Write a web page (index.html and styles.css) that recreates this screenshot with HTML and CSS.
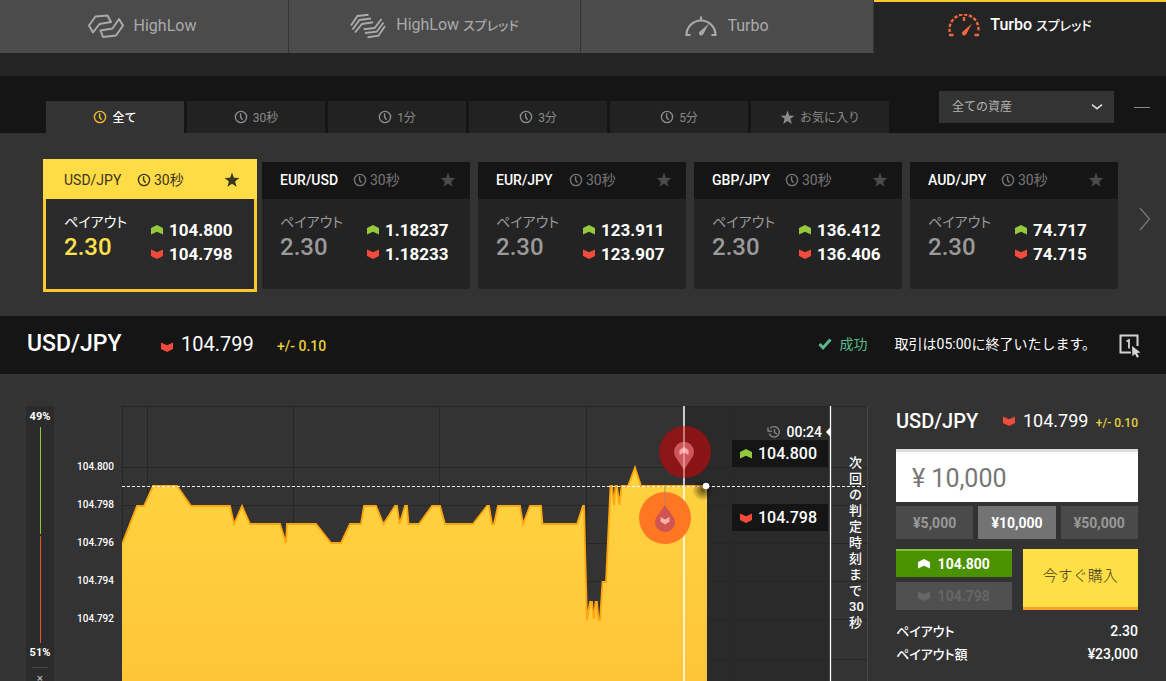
FILE: index.html
```html
<!DOCTYPE html>
<html lang="ja">
<head>
<meta charset="utf-8">
<meta name="viewport" content="width=device-width, initial-scale=1">
<title>Turbo スプレッド</title>
<link rel="stylesheet" href="styles.css">
</head>
<body>
<svg class="defs" aria-hidden="true">
  <symbol id="up" viewBox="0 0 12 10"><path d="M0 3 6 0l6 3V9.500L6 6.800 0 9.500z"/></symbol>
  <symbol id="down" viewBox="0 0 12 10"><path d="M0 .5l6 2.700L12 .5V7L6 10 0 7z"/></symbol>
  <symbol id="clock" viewBox="0 0 14 14"><g fill="none" stroke="currentColor" stroke-width="1.400"><circle cx="7" cy="7" r="5.600"/><path d="M6.600 3.200v4l2 2.600"/></g></symbol>
  <symbol id="star" viewBox="0 0 16 16"><path d="M8 .6l1.900 5.200 5.500.2-4.300 3.400 1.500 5.400L8 11.700l-4.600 3.100 1.500-5.400L.6 6l5.500-.2z"/></symbol>
</svg>

<nav class="products">
  <a class="product" href="#highlow">
    <svg class="logo" viewBox="0 0 36 26"><g fill="none" stroke="currentColor" stroke-width="2" stroke-linejoin="round"><path d="M5 19.500 1 12.500 7.500 3.500 19.500 2.500 23 9 11.500 11z"/><path d="M31 6l4 6.500-7 10L15 24l-2.500-6.500 12-2z"/></g></svg>
    <span>HighLow</span>
  </a>
  <a class="product" href="#highlow-spread">
    <svg class="logo" viewBox="0 0 36 26"><g fill="none" stroke="currentColor" stroke-width="1.900"><path d="M1 12.500 7.500 3l11-1.300M2.500 16.500 9.500 7l11.500-1.500M5 19.500l7-8.500 11-1.700M35 13l-6.500 9.700-11 1.500M33.500 9.500l-6.800 9.200L15 20M31.500 6l-7 9-11 1.300"/></g></svg>
    <span>HighLow <span class="kana">スプレッド</span></span>
  </a>
  <a class="product" href="#turbo">
    <svg class="gauge" viewBox="0 0 32 24"><path d="M5.500 21H1.500A14.500 14.500 0 1 1 30.500 21H26.500M16 2.500v4" fill="none" stroke="currentColor" stroke-width="2.200"/><path d="M24 9.500l-5.500 10.200a2.300 2.300 0 1 1-3-2.700z" fill="currentColor"/></svg>
    <span>Turbo</span>
  </a>
  <a class="product product-active" href="#turbo-spread" aria-current="page">
    <svg class="gauge gauge-hot" viewBox="0 0 32 24"><path d="M1.800 18A14.500 14.500 0 1 1 30.200 18" fill="none" stroke="currentColor" stroke-width="2.400" stroke-dasharray="3.400 1.700"/><path d="M1 21h4.500M26.500 21H31M16 3v4" stroke="currentColor" stroke-width="2.400"/><path d="M24 9.500l-5.500 10.200a2.300 2.300 0 1 1-3-2.700z" fill="currentColor"/></svg>
    <span>Turbo <span class="kana">スプレッド</span></span>
  </a>
</nav>

<header class="filters">
  <div class="periods">
    <button class="period period-active"><svg class="period-clock"><use href="#clock"/></svg><span>全て</span></button>
    <button class="period"><svg class="period-clock"><use href="#clock"/></svg><span>30秒</span></button>
    <button class="period"><svg class="period-clock"><use href="#clock"/></svg><span>1分</span></button>
    <button class="period"><svg class="period-clock"><use href="#clock"/></svg><span>3分</span></button>
    <button class="period"><svg class="period-clock"><use href="#clock"/></svg><span>5分</span></button>
    <button class="period"><svg class="period-star"><use href="#star"/></svg><span>お気に入り</span></button>
  </div>
  <div class="filter-tools">
    <select class="assets" aria-label="資産"><option>全ての資産</option></select>
    <svg class="assets-arrow" viewBox="0 0 12 6"><path d="M1 .7l5 4 5-4" fill="none" stroke="currentColor" stroke-width="1.500"/></svg>
    <button class="collapse" aria-label="折りたたむ"></button>
  </div>
</header>

<section class="carousel">
  <div class="cards">
    <article class="card card-active">
      <div class="card-head"><span class="pair">USD/JPY</span><svg class="card-clock"><use href="#clock"/></svg><span class="duration">30秒</span><svg class="card-star"><use href="#star"/></svg></div>
      <div class="card-body"><div class="payout"><span class="kana">ペイアウト</span><strong>2.30</strong></div>
        <div class="rates"><span><svg class="arrow up"><use href="#up"/></svg>104.800</span><span><svg class="arrow down"><use href="#down"/></svg>104.798</span></div></div>
    </article>
    <article class="card">
      <div class="card-head"><span class="pair">EUR/USD</span><svg class="card-clock"><use href="#clock"/></svg><span class="duration">30秒</span><svg class="card-star"><use href="#star"/></svg></div>
      <div class="card-body"><div class="payout"><span class="kana">ペイアウト</span><strong>2.30</strong></div>
        <div class="rates"><span><svg class="arrow up"><use href="#up"/></svg>1.18237</span><span><svg class="arrow down"><use href="#down"/></svg>1.18233</span></div></div>
    </article>
    <article class="card">
      <div class="card-head"><span class="pair">EUR/JPY</span><svg class="card-clock"><use href="#clock"/></svg><span class="duration">30秒</span><svg class="card-star"><use href="#star"/></svg></div>
      <div class="card-body"><div class="payout"><span class="kana">ペイアウト</span><strong>2.30</strong></div>
        <div class="rates"><span><svg class="arrow up"><use href="#up"/></svg>123.911</span><span><svg class="arrow down"><use href="#down"/></svg>123.907</span></div></div>
    </article>
    <article class="card">
      <div class="card-head"><span class="pair">GBP/JPY</span><svg class="card-clock"><use href="#clock"/></svg><span class="duration">30秒</span><svg class="card-star"><use href="#star"/></svg></div>
      <div class="card-body"><div class="payout"><span class="kana">ペイアウト</span><strong>2.30</strong></div>
        <div class="rates"><span><svg class="arrow up"><use href="#up"/></svg>136.412</span><span><svg class="arrow down"><use href="#down"/></svg>136.406</span></div></div>
    </article>
    <article class="card">
      <div class="card-head"><span class="pair">AUD/JPY</span><svg class="card-clock"><use href="#clock"/></svg><span class="duration">30秒</span><svg class="card-star"><use href="#star"/></svg></div>
      <div class="card-body"><div class="payout"><span class="kana">ペイアウト</span><strong>2.30</strong></div>
        <div class="rates"><span><svg class="arrow up"><use href="#up"/></svg>74.717</span><span><svg class="arrow down"><use href="#down"/></svg>74.715</span></div></div>
    </article>
  </div>
  <button class="next" aria-label="次へ"><svg viewBox="0 0 12 24"><path d="M1 1l9.500 11L1 23" fill="none" stroke="currentColor" stroke-width="1.300"/></svg></button>
</section>

<section class="quote">
  <h1 class="quote-pair">USD/JPY</h1>
  <svg class="arrow down"><use href="#down"/></svg>
  <span class="quote-rate">104.799</span>
  <span class="quote-spread">+/- 0.10</span>
  <span class="status"><svg viewBox="0 0 14 12"><path d="M1.500 6l3.500 3.800L12.500 1.500" fill="none" stroke="currentColor" stroke-width="3"/></svg>成功</span>
  <span class="notice">取引は05:00に終了いたします。</span>
  <button class="one-click" aria-label="ワンクリック注文">
    <svg viewBox="0 0 24 24"><path d="M13 18.500H2.500v-17h17V12" fill="none" stroke="#d5d5d5" stroke-width="2"/><path d="M8.500 7.500 11 6v8.500" fill="none" stroke="#d5d5d5" stroke-width="1.800"/><path d="M14 12l8.500 6.500-3.500.6 2 3.700-2 1-2-3.800-2.600 2.300z" fill="#d5d5d5"/></svg>
  </button>
</section>

<main class="trade">
  <aside class="sentiment">
    <span>49%</span>
    <div class="sentiment-high"></div>
    <div class="sentiment-low"></div>
    <span>51%</span>
    <button class="sentiment-close" aria-label="閉じる">×</button>
  </aside>
  <div class="axis"><span>104.800</span><span>104.798</span><span>104.796</span><span>104.794</span><span>104.792</span></div>
  <div class="plot">
    <svg class="chart" viewBox="0 0 746 275" role="img" aria-label="USD/JPY チャート">
      <defs>
        <linearGradient id="fill" x1="0" y1="0" x2="0" y2="1"><stop offset="0" stop-color="#ffd340"/><stop offset="1" stop-color="#ffc539"/></linearGradient>
        <radialGradient id="glow"><stop offset="0" stop-color="#000" stop-opacity=".6"/><stop offset="1" stop-color="#000" stop-opacity="0"/></radialGradient>
        <path id="series" d="M.5 137L15 100h7l9-20h24l14 20h39l4 18 8-18 8 18h30l6 19 1-19h29l15 19h10l9-19h11l3-18h12l7.500 18L273 100h2l2.500 18 5.500-18h2l1.500 18H297l13-18h8l5 18h28l14-18h2l3 18h2l4-18h22l3 18 7-18h11l1.500 18H455L461 100H462L465 214 468 196H470L472 213 473.500 196H475L476.500 214H478L480.500 176H484L488.500 80H490L492 99 493.500 80H495L497.500 99 499.500 80H506L513 61.500 519 80H584"/>
      </defs>
      <rect x="562" y="0" width="146" height="275" fill="#2a2a2a"/>
      <path d="M0 .5h745M0 61.500h745M0 99.500h745M0 137.500h745M0 175.500h745M0 213.500h745M0 253.500h745M.5 0v275M25.500 0v275M171.500 0v275M317.500 0v275M464.500 0v275M611.500 0v275" fill="none" stroke="#262626"/>
      <path d="M745.500 0v275" stroke="#484848"/>
      <path d="M0 275V137L15 100h7l9-20h24l14 20h39l4 18 8-18 8 18h30l6 19 1-19h29l15 19h10l9-19h11l3-18h12l7.500 18L273 100h2l2.500 18 5.500-18h2l1.500 18H297l13-18h8l5 18h28l14-18h2l3 18h2l4-18h22l3 18 7-18h11l1.500 18H455L461 100H462L465 214 468 196H470L472 213 473.500 196H475L476.500 214H478L480.500 176H484L488.500 80H490L492 99 493.500 80H495L497.500 99 499.500 80H506L513 61.500 519 80H585V275z" fill="url(#fill)"/>
      <use href="#series" fill="none" stroke="#ffa50f" stroke-width="1.800"/>
      <path d="M0 80.500h745" stroke="#fff" stroke-dasharray="3 2"/>
      <path d="M562 0v275" stroke="#fff" stroke-width="2" opacity=".75"/>
      <path d="M708.500 0v275" stroke="#fff" stroke-width="1.300"/>
      <path d="M708 21.500l-4 4.500 4 4.500z" fill="#fff"/>
      <circle cx="581" cy="84" r="11" fill="url(#glow)"/><circle cx="584" cy="80" r="3.200" fill="#fff"/>
      <circle cx="563" cy="46" r="26" fill="#a00f12" opacity=".8"/>
      <path d="M562 64l-7-11a10 10 0 1 1 14 0z" fill="#cf565a"/><path d="M557.500 44l4.500-3 4.500 3v5l-4.500-2.500-4.500 2.500z" fill="#ffa7a7"/>
      <path d="M562 20v52" stroke="#fff" opacity=".45" stroke-width="1.500"/>
      <circle cx="543" cy="112" r="26" fill="#ff7722"/>
      <path d="M543 80v20" stroke="#a98b80"/><path d="M543 99l-7 10a10 10 0 1 0 14 0z" fill="#cf5553"/><path d="M538.500 111l4.500 2.500 4.500-2.500v4.500l-4.500 3-4.500-3z" fill="#ffb1a5"/>
    </svg>
    <div class="timer"><svg viewBox="0 0 14 14"><path d="M2.200 8.500A5.200 5.200 0 1 0 3.300 3.300M1 2.200v4h4M7.500 4v3.500L10 9" fill="none" stroke="currentColor" stroke-width="1.300"/></svg>00:24</div>
    <div class="tag tag-high"><svg class="arrow up"><use href="#up"/></svg>104.800</div>
    <div class="tag tag-low"><svg class="arrow down"><use href="#down"/></svg>104.798</div>
    <div class="countdown">次回の判定時刻まで<span>30</span>秒</div>
  </div>

  <form class="order">
    <div class="order-head">
      <h2 class="order-pair">USD/JPY</h2>
      <svg class="arrow down"><use href="#down"/></svg>
      <span class="order-rate">104.799</span>
      <span class="order-spread">+/- 0.10</span>
    </div>
    <input class="amount" type="text" value="¥ 10,000" aria-label="金額">
    <div class="presets">
      <button type="button" class="preset">¥5,000</button>
      <button type="button" class="preset preset-active">¥10,000</button>
      <button type="button" class="preset">¥50,000</button>
    </div>
    <div class="actions">
      <div class="sides">
        <button type="button" class="side side-high"><svg class="arrow"><use href="#up"/></svg>104.800</button>
        <button type="button" class="side side-low"><svg class="arrow"><use href="#down"/></svg>104.798</button>
      </div>
      <button type="button" class="buy">今すぐ購入</button>
    </div>
    <dl class="totals">
      <div><dt class="kana">ペイアウト</dt><dd>2.30</dd></div>
      <div><dt class="kana">ペイアウト額</dt><dd>¥23,000</dd></div>
    </dl>
  </form>
</main>
</body>
</html>
```
FILE: styles.css
```css
* { box-sizing: border-box; }

body {
  margin: 0;
  min-height: 100vh;
  display: flex;
  flex-direction: column;
  background: #333;
  color: #fff;
  font: 14px/20px Roboto, "Noto Sans CJK JP", sans-serif;
}

button, input, select { font: inherit; color: inherit; border: 0; border-radius: 0; margin: 0; padding: 0; background: none; }
button { cursor: pointer; }
h1, h2, dl, dd { margin: 0; font-weight: 500; }
svg { display: block; flex: none; fill: currentColor; }
.defs { position: absolute; width: 0; height: 0; }
.kana { font-feature-settings: "palt"; }

.arrow { width: 12px; height: 10px; }
.up { color: #95c93d; }
.down { color: #f24b3c; }

/* product tabs */
.products { display: grid; grid-template-columns: 289fr 292fr 293fr 292fr; background: #242424; padding-bottom: 23px; }
.product {
  display: flex; align-items: center; justify-content: center; gap: 10px;
  height: 53px; padding-bottom: 2px;
  background: #4b4b4b; color: #aaa; font-size: 16px; text-decoration: none;
  border-right: 1px solid #343434;
}
.product:first-child { padding-right: 4px; }
.product .kana { font-size: 13px; font-weight: 500; }
.product-active { background: #242424; color: #fff; font-weight: 500; border-right: 0; border-top: 2px solid #ffc72e; padding-bottom: 4px; }
.logo { width: 36px; height: 26px; }
.gauge { width: 32px; height: 24px; }
.gauge-hot { color: #f4683a; }

/* period filter */
.filters { display: flex; justify-content: space-between; background: #151515; padding: 15px 16px 0 46px; height: 57px; }
.periods { display: flex; align-items: flex-end; gap: 3px; flex: 0 1 843px; }
.period {
  flex: 1; height: 32px; display: flex; align-items: center; justify-content: center; gap: 5px;
  background: #222; color: #8a8a8a; font-size: 12px; white-space: nowrap;
}
.period span { padding-top: 2px; }
.period-active { background: #333; color: #fff; font-weight: 500; }
.period-active svg { color: #f5b92e; }
.period-clock { width: 14px; height: 14px; }
.period-star { width: 15px; height: 15px; }
.filter-tools { position: relative; display: flex; gap: 20px; height: 32px; align-items: center; }
.assets { appearance: none; width: 175px; height: 32px; padding: 0 13px; background: #333; color: #b5b5b5; font-size: 12px; }
.assets-arrow { position: absolute; left: 152px; top: 13px; width: 12px; height: 6px; color: #ddd; pointer-events: none; }
.collapse { width: 16px; height: 20px; background: linear-gradient(#8a8a8a, #8a8a8a) center / 16px 1px no-repeat; }

/* asset cards */
.carousel { display: flex; padding: 29px 0 27px 46px; }
.cards { flex: 1; display: grid; grid-template-columns: repeat(5, 1fr); gap: 8px; }
.card { background: #232323; border-radius: 2px; color: #9a9a9a; }
.card-head { display: flex; align-items: center; height: 37px; padding: 0 14px 2px 18px; background: #151515; }
.pair { width: 73px; color: #fff; font-weight: 500; }
.card-clock { width: 14px; height: 14px; margin-right: 3px; color: #777; }
.duration { color: #777; }
.card-star { width: 16px; height: 16px; margin-left: auto; color: #4a4a4a; }
.card-body { display: flex; height: 90px; padding: 13px 0 0 18px; }
.payout { width: 87px; font-size: 14px; line-height: 20px; }
.payout strong { display: block; font-size: 24px; line-height: 30px; font-weight: 500; }
.rates { padding-top: 6px; color: #fff; font-size: 17px; font-weight: 700; line-height: 24px; }
.rates span { display: flex; align-items: center; gap: 6px; }
.card-active { background: #2a2a2a; color: #fff; box-shadow: 0 0 0 3px #ffc72e; border-radius: 0; }
.card-active .card-head { background: #ffdb45; box-shadow: 0 0 0 3px #ffdb45; clip-path: inset(-3px -3px 0 -3px); }
.card-active .card-head * { color: #3a3520; }
.card-active .pair { font-weight: 400; }
.card-active strong { color: #ffe14b; }
.next { width: 48px; display: flex; align-items: center; justify-content: center; color: #777; }
.next svg { width: 12px; height: 24px; margin: 0 0 14px 6px; }

/* quote bar */
.quote { display: flex; align-items: center; height: 58px; padding: 0 24px 2px 27px; background: #151515; }
.quote-pair { width: 134px; font-size: 23px; }
.quote-rate { margin-left: 8px; width: 96px; font-size: 20px; }
.quote .arrow { margin-top: 6px; }
.quote-spread { color: #e8cf3a; padding-top: 4px; font-weight: 500; }
.status { display: flex; align-items: center; gap: 8px; margin-left: auto; color: #5cb98a; }
.status svg { width: 14px; height: 12px; }
.notice { margin-left: 27px; }
.one-click { margin-left: 22px; }
.one-click svg { width: 24px; height: 24px; margin-top: 4px; }

/* chart area */
.trade { flex: 1; display: grid; grid-template-columns: 28px 60px 1fr 242px; align-items: start; padding: 32px 28px 0 26px; overflow: hidden; }
.sentiment { display: flex; flex-direction: column; align-items: center; height: 275px; padding-top: 1px; background: #2b2b2b; font-size: 11px; font-weight: 700; overflow: hidden; }
.sentiment-high, .sentiment-low { width: 1px; flex: 1; }
.sentiment-high { background: #8fc73a; margin-bottom: 2px; }
.sentiment-low { background: #ee4e2e; }
.sentiment span { line-height: 20px; }
.sentiment-close { width: 16px; height: 14px; margin-top: 4px; border-top: 1px solid #4a4a4a; color: #aaa; line-height: 22px; }
.axis { display: flex; flex-direction: column; padding-top: 42px; text-align: right; font-size: 10px; font-weight: 500; line-height: 38px; }
.plot { position: relative; margin: 0 28px 0 8px; }
.chart { width: 100%; height: auto; }
.timer { position: absolute; right: 46px; top: 16px; display: flex; align-items: center; gap: 5px; font-weight: 500; }
.timer svg { width: 14px; height: 14px; color: #888; }
.tag { position: absolute; right: 40px; display: flex; align-items: center; gap: 6px; width: 96px; height: 27px; padding-left: 8px; background: #151515; font-size: 16px; font-weight: 500; }
.tag-high { top: 34px; }
.tag-low { top: 98px; }
.countdown { position: absolute; right: 3px; top: 49px; width: 16px; line-height: 16px; font-size: 13px; font-weight: 500; word-break: break-all; }
.countdown span { display: block; }

/* order form */
.order-head { display: flex; align-items: center; height: 43px; padding-bottom: 13px; }
.order-pair { width: 107px; font-size: 20px; }
.order-rate { margin-left: 8px; font-size: 18px; }
.order-spread { margin-left: auto; padding-top: 4px; font-size: 12px; font-weight: 500; color: #e8cf3a; }
.amount { display: block; width: 100%; height: 53px; padding: 2px 16px 0; background: #fff; border-top: 3px solid #ddd; color: #777; font-size: 25px; }
.presets { display: grid; grid-template-columns: repeat(3, 1fr); gap: 5px; margin-top: 4px; }
.preset { height: 33px; background: #4a4a4a; color: #999; font-size: 14px; font-weight: 700; }
.preset-active { background: #737373; color: #fff; }
.actions { display: grid; grid-template-columns: 1fr 1fr; gap: 11px; margin-top: 10px; }
.sides { display: grid; gap: 5px; }
.side { display: flex; align-items: center; justify-content: center; gap: 8px; height: 28px; font-size: 14px; font-weight: 700; }
.side-high { background: #4b9200; border-top: 2px solid #85bd3c; }
.side-low { background: #505050; color: #666; }
.buy { background: #ffdf46; border-bottom: 3px solid #ff9e2c; color: #3a3520; font-size: 15px; font-weight: 300; padding-bottom: 4px; }
.totals { margin-top: 10px; font-weight: 500; line-height: 23px; }
.totals div { display: flex; justify-content: space-between; }
.totals dt { font-size: 13px; }
```
